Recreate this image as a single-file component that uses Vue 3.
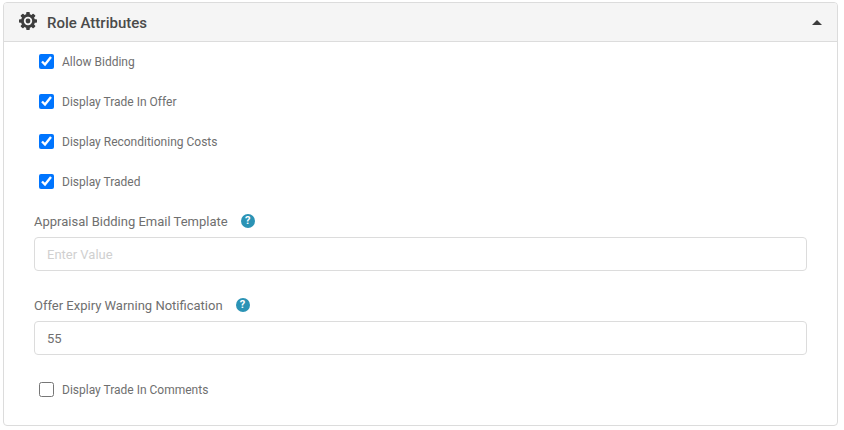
<script setup>
const topChecks = ['Allow Bidding', 'Display Trade In Offer', 'Display Reconditioning Costs', 'Display Traded']
</script>

<template>
  <div class="page">
    <section class="card">
      <header class="head">
        <svg class="gear" width="18" height="18" viewBox="0 0 18 18" aria-hidden="true">
          <g fill="#3d3d3d">
            <rect x="7.2" y="0" width="3.6" height="18" rx="0.8" />
            <rect x="7.2" y="0" width="3.6" height="18" rx="0.8" transform="rotate(45 9 9)" />
            <rect x="7.2" y="0" width="3.6" height="18" rx="0.8" transform="rotate(90 9 9)" />
            <rect x="7.2" y="0" width="3.6" height="18" rx="0.8" transform="rotate(135 9 9)" />
          </g>
          <circle cx="9" cy="9" r="5" fill="none" stroke="#3d3d3d" stroke-width="4" />
          <circle cx="9" cy="9" r="4.2" fill="#f5f5f5" />
          <circle cx="9" cy="9" r="2.4" fill="#3d3d3d" />
        </svg>
        <h2 class="title">Role Attributes</h2>
        <span class="caret"></span>
      </header>
      <div class="body">
        <label v-for="item in topChecks" :key="item" class="check">
          <input type="checkbox" checked />
          <span>{{ item }}</span>
        </label>

        <div class="field first">
          <div class="field-label">
            <span>Appraisal Bidding Email Template</span>
            <span class="help">?</span>
          </div>
          <input class="text" type="text" placeholder="Enter Value" />
        </div>

        <div class="field">
          <div class="field-label">
            <span>Offer Expiry Warning Notification</span>
            <span class="help">?</span>
          </div>
          <input class="text" type="text" value="55" />
        </div>

        <label class="check last">
          <input type="checkbox" />
          <span>Display Trade In Comments</span>
        </label>
      </div>
    </section>
  </div>
</template>

<style>
body { background: #fff; }
</style>

<style scoped>
.page {
  width: 844px;
  height: 430px;
  padding: 2px 6px 0 3px;
  box-sizing: border-box;
  font-family: Roboto, "Liberation Sans", sans-serif;
  overflow: hidden;
}
.card {
  height: 424px;
  box-sizing: border-box;
  border: 1px solid #dcdcdc;
  border-radius: 4px;
  overflow: hidden;
}
.head {
  height: 38px;
  display: flex;
  align-items: center;
  padding-left: 15px;
  padding-right: 15px;
  background: #f5f5f5;
  border-bottom: 1px solid #dcdcdc;
}
.gear {
  margin-bottom: 2px;
}
.title {
  margin: 2px 0 0 10px;
  font-size: 15px;
  font-weight: 500;
  color: #4a4a4a;
  flex: 1;
}
.caret {
  width: 0;
  height: 0;
  margin-top: 1px;
  border-left: 5px solid transparent;
  border-right: 5px solid transparent;
  border-bottom: 5px solid #3d3d3d;
}
.body {
  padding: 0 30px;
  display: flex;
  flex-direction: column;
}
.check {
  display: flex;
  align-items: center;
  height: 40px;
  padding-left: 5px;
  font-size: 12px;
  color: #6f6f6f;
}
.check input {
  width: 15px;
  height: 15px;
  margin: 0 8px 2px 0;
}
.field {
  margin-top: 26px;
}
.field.first {
  margin-top: 11px;
}
.field-label {
  display: flex;
  align-items: center;
  gap: 13px;
  height: 16px;
  font-size: 13px;
  color: #6f6f6f;
}
.help {
  width: 14px;
  height: 14px;
  border-radius: 50%;
  background: #2b93b5;
  color: #fff;
  font-size: 11px;
  font-weight: 700;
  line-height: 14px;
  text-align: center;
}
.text {
  display: block;
  width: 773px;
  height: 34px;
  box-sizing: border-box;
  margin-top: 8px;
  padding: 0 12px;
  border: 1px solid #dcdcdc;
  border-radius: 4px;
  outline: none;
  font-family: inherit;
  font-size: 13px;
  color: #6f6f6f;
}
.text::placeholder {
  color: #d0d0d0;
}
.check.last {
  margin-top: 15px;
}
</style>
